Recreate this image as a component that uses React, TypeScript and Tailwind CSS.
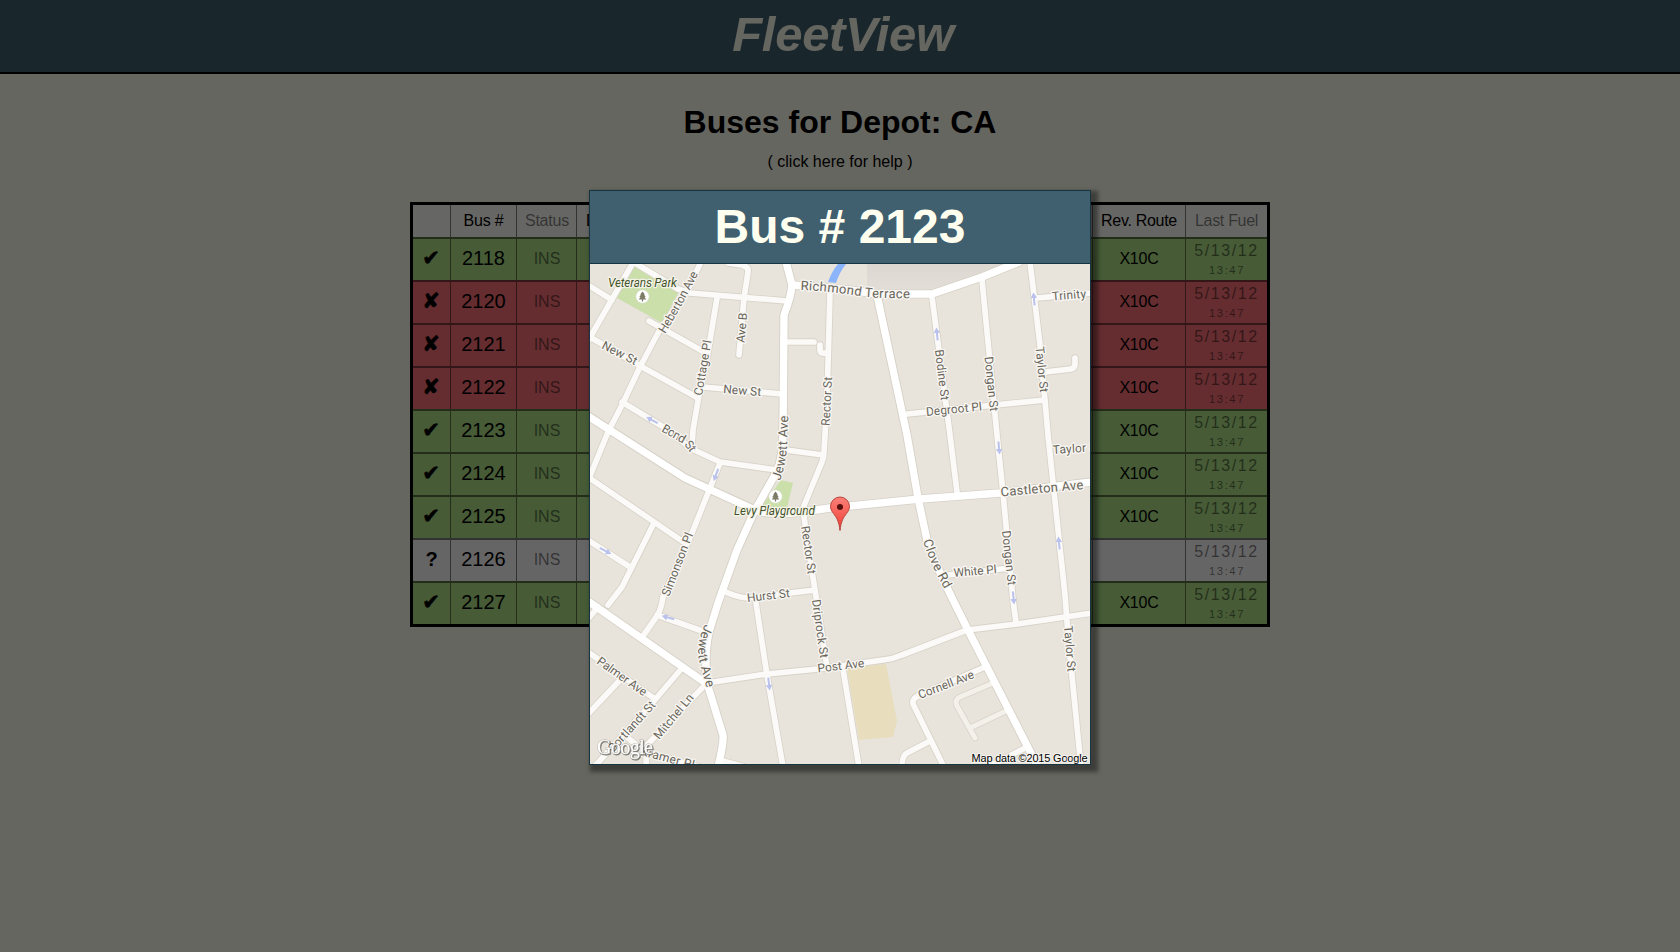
import React from 'react';

type Status = 'ok' | 'bad' | 'unknown';
type Bus = { id: string; status: Status; route: string };

const buses: Bus[] = [
  { id: '2118', status: 'ok', route: 'X10C' },
  { id: '2120', status: 'bad', route: 'X10C' },
  { id: '2121', status: 'bad', route: 'X10C' },
  { id: '2122', status: 'bad', route: 'X10C' },
  { id: '2123', status: 'ok', route: 'X10C' },
  { id: '2124', status: 'ok', route: 'X10C' },
  { id: '2125', status: 'ok', route: 'X10C' },
  { id: '2126', status: 'unknown', route: '' },
  { id: '2127', status: 'ok', route: 'X10C' },
];

const rowColor: Record<Status, string> = {
  ok: 'bg-[#afe487]',
  bad: 'bg-[#fc7078]',
  unknown: 'bg-[#fffdff]',
};

const columns = 'grid grid-cols-[38px_66px_60px_516px_93px_81px]';
const cell = 'flex items-center justify-center border-r border-black/50';

function StatusMark({ status }: { status: Status }) {
  if (status === 'unknown') return <span className="mb-[3px] text-xl font-bold">?</span>;
  return (
    <span className="mb-[3px] mr-px font-['DejaVu_Sans'] text-[21px] leading-none [-webkit-text-stroke:0.7px_black]">
      {status === 'ok' ? '✔' : '✘'}
    </span>
  );
}

function BusRow({ bus }: { bus: Bus }) {
  return (
    <div className={`${columns} ${rowColor[bus.status]} h-[43px] border-t-2 border-black/50`}>
      <div className={cell}><StatusMark status={bus.status} /></div>
      <div className={`${cell} pb-[4px] text-xl`}>{bus.id}</div>
      <div className={`${cell} pb-px pl-px text-black/50`}>INS</div>
      <div className={cell} />
      <div className={`${cell} pb-px tracking-[-0.2px]`}>{bus.route}</div>
      <div className="flex flex-col items-center text-black/50 tracking-[1.6px]">
        <span className="mt-[2px] leading-[20px]">5/13/12</span>
        <span className="mt-[1px] pl-px text-[11.2px] leading-[16px]">13:47</span>
      </div>
    </div>
  );
}

const minorRoads = [
  'M634 261L588 341',
  'M630 260L678 289L690 293L787 301',
  'M701 262L688 289L658 333L640 367L622 405L608 432L588 481',
  'M588 285L612 300',
  'M649 321L704 352',
  'M588 336L642 367L698 398',
  'M717 298L708 352L699 395L693 430L692 446',
  'M728 263L742 265Q749 267 748 272L744 298L739 355',
  'M785 342L814 342',
  'M830 293L827 400L824 452Q824 457 822 462L803 508L807 540L815 590L827 667',
  'M826 353Q820 354 820 350L820 345',
  'M703 387L782 394',
  'M622 402L665 428L692 449L720 462L777 470',
  'M786 450L823 455',
  'M720 463L692 533L663 597Q661 610 657 616L643 636',
  'M588 477L685 543',
  'M653 525L622 587L608 605',
  'M588 540L630 567',
  'M588 619L598 607',
  'M657 615L705 632',
  'M707 683L767 674L818 669L840 666L883 660Q893 659 902 655L967 630L1017 624L1092 613',
  'M588 652L655 699',
  'M682 668L653 702L595 766',
  'M620 680L588 714',
  'M702 688L647 745L646 766',
  'M628 738L645 752L700 767',
  'M723 761L745 767',
  'M724 591Q735 597 748 598L815 590',
  'M756 603L767 675L783 767',
  'M843 669L859 767',
  'M932 297L950 435L957 492',
  'M982 280L997 435L1003 493L1013 600L1016 622',
  'M1030 262L1040 345L1048 435L1065 595L1068 635L1081 767',
  'M1037 298L1092 293',
  'M1045 372L1071 369Q1075 368 1075 364L1075 358',
  'M907 414L1045 400',
  'M947 575L1010 568',
  'M985 667L920 695Q910 699 914 706L944 767',
  'M930 741L907 753Q902 756 902 767',
  'M1027 747L988 767',
];
const faintRoads = ['M993 683L960 697Q954 700 957 706L975 738', 'M1008 710L970 728'];
const majorRoads = [
  'M786 262L792 285Q791 297 784 315L783 435Q783 459 776 473L755 510L737 550L718 603L709 632Q704 655 707 683L723 735Q724 742 718 767',
  'M792 285L850 290L877 294L932 294L982 277L1019 262',
  'M588 416L685 478L755 510Q770 516 802 512L830 508L920 499L1000 493L1092 482',
  'M588 601L707 684',
  'M877 295L907 435L918 498L927 540Q932 557 953 600L968 630L1038 767',
];

type Label = { text: string; d: string; len?: number; size?: number; italic?: boolean };

const labels: Label[] = [
  { text: 'Veterans Park', d: 'M608 287L700 287', len: 69, italic: true },
  { text: 'Heberton Ave', d: 'M665 334Q684 303 701 268', len: 69 },
  { text: 'New St', d: 'M601 348L640 368', len: 38 },
  { text: 'Cottage Pl', d: 'M702 396L713 332', len: 56 },
  { text: 'Ave B', d: 'M744.5 343L748 305', len: 30 },
  { text: 'New St', d: 'M723 393L765 396.5', len: 38 },
  { text: 'Rector St', d: 'M829.5 426L832.5 370', len: 49 },
  { text: 'Jewett Ave', d: 'M780 481Q786 465 787 445L789 405', len: 66, size: 13 },
  { text: 'Bond St', d: 'M661 431L680 442Q687 446 694 459', len: 37 },
  { text: 'Levy Playground', d: 'M734 515L840 515', len: 81, italic: true },
  { text: 'Simonson Pl', d: 'M669 597L696 528', len: 67 },
  { text: 'Hurst St', d: 'M747.5 602L800 596', len: 43 },
  { text: 'Rector St', d: 'M801 527Q805 550 809 585', len: 48 },
  { text: 'Driprock St', d: 'M812 600L821.5 668', len: 59 },
  { text: 'Post Ave', d: 'M818 672.5L870 666.500', len: 47 },
  { text: 'Jewett Ave', d: 'M705 624Q696 643 699 660L709 697', len: 66, size: 13 },
  { text: 'Palmer Ave', d: 'M596 663L654 704', len: 58 },
  { text: 'Cortlandt St', d: 'M613 753L664 697', len: 64 },
  { text: 'Mitchel Ln', d: 'M659 740L701 690', len: 55 },
  { text: 'Kramer Pl', d: 'M640 755L705 772', len: 55 },
  { text: 'Bodine St', d: 'M935 350L942 410', len: 51 },
  { text: 'Dongan St', d: 'M984.5 357L991.5 425', len: 55 },
  { text: 'Taylor St', d: 'M1035.5 347L1041 402', len: 46 },
  { text: 'Degroot Pl', d: 'M926.5 416L992 409.5', len: 56 },
  { text: 'Trinity', d: 'M1052.5 300.5L1095 297', len: 34 },
  { text: 'Richmond Terrace', d: 'M800.5 290Q830 291 862 296.5Q885 299 925 298', len: 110, size: 13 },
  { text: 'Taylor St', d: 'M1053 454L1115 450', len: 48 },
  { text: 'Castleton Ave', d: 'M1001 496.5L1090 488.5', len: 83, size: 13 },
  { text: 'Clove Rd', d: 'M923 541Q930 565 950 598', len: 53, size: 13 },
  { text: 'White Pl', d: 'M954 577L1005 572.5', len: 43 },
  { text: 'Dongan St', d: 'M1002 531L1009 595', len: 55 },
  { text: 'Cornell Ave', d: 'M920 699L985 674', len: 59 },
  { text: 'Taylor St', d: 'M1064 626L1069 690', len: 46 },
];

const oneWayArrows: [number, number, number][] = [
  [652, 420, 208],
  [937, 334, 264],
  [1034, 299, 264],
  [716, 475, 110],
  [605.5, 551, 28],
  [668, 617.5, 196],
  [769, 684, 83],
  [999, 448, 85],
  [1059, 543, 264],
  [1013.5, 598, 85],
];

function Tree({ x, y }: { x: number; y: number }) {
  return (
    <g transform={`translate(${x} ${y})`}>
      <circle r="6.7" fill="#fff" stroke="#cfd8bd" strokeWidth=".6" />
      <path d="M0-5L2.4-2H1.5L3.2.5H2L3.8 3H.6V5H-.6V3H-3.8L-2 .5H-3.2L-1.5-2H-2.4Z" fill="#7c7c68" />
    </g>
  );
}

function StreetMap() {
  return (
    <svg className="block" width="500" height="500" viewBox="590 264 500 500">
      <defs>
        <linearGradient id="pin" x1="0" y1="0" x2="0" y2="1">
          <stop offset="0" stopColor="#fb8078" />
          <stop offset="1" stopColor="#f03c33" />
        </linearGradient>
        <linearGradient id="shore" x1="0" y1="0" x2="0" y2="1">
          <stop offset="0" stopColor="#dcd7d0" />
          <stop offset="1" stopColor="#e3ded7" />
        </linearGradient>
      </defs>
      <rect x="590" y="264" width="500" height="500" fill="#e8e4dc" />
      <path d="M867 264H1017L982 276L932 292L867 291Z" fill="url(#shore)" />
      <path d="M838 264Q832 271 828 282L836 283Q839 273 846 264Z" fill="#8cb4fb" />
      <path d="M634 266L680 290L662 323L617 298Z" fill="#cbdfaa" />
      <path d="M781 480L793 483L787 508L762 506Z" fill="#cbdfaa" />
      <path d="M847 668L886 664L897 721L893 737L859 740Z" fill="#e8ddbd" />
      <g fill="none" strokeLinecap="round" strokeLinejoin="round">
        <g stroke="#d8d3c8" strokeWidth="7.4">
          {minorRoads.map((d) => <path key={d} d={d} />)}
        </g>
        <g stroke="#d8d3c8" strokeWidth="6.6">
          {faintRoads.map((d) => <path key={d} d={d} />)}
        </g>
        <g stroke="#d6d1c6" strokeWidth="9.2">
          {majorRoads.map((d) => <path key={d} d={d} />)}
        </g>
        <g stroke="#f4f1ea" strokeWidth="5">
          {faintRoads.map((d) => <path key={d} d={d} />)}
        </g>
        <g stroke="#fbfaf8" strokeWidth="5.7">
          {minorRoads.map((d) => <path key={d} d={d} />)}
        </g>
        <g stroke="#fff" strokeWidth="7.4">
          {majorRoads.map((d) => <path key={d} d={d} />)}
        </g>
      </g>
      {oneWayArrows.map(([x, y, a]) => (
        <path
          key={`${x}-${y}`}
          transform={`translate(${x} ${y}) rotate(${a})`}
          d="M-6.5-1H1V-3.2L6.5 0L1 3.2V1H-6.500Z"
          fill="#b9c1ec"
        />
      ))}
      <Tree x={642.5} y={296.5} />
      <Tree x={775.5} y={496.5} />
      {labels.map(({ text, d, len, size, italic }, i) => (
        <g key={i}>
          <path id={`street-${i}`} d={d} fill="none" />
          <text
            fontFamily="Roboto, sans-serif"
            fontSize={size ?? 12}
            fontStyle={italic ? 'italic' : 'normal'}
            fill={italic ? '#43522c' : '#69655a'}
            stroke={italic ? '#f3f2e6' : '#f8f6f2'}
            strokeWidth="2.6"
            strokeLinejoin="round"
            paintOrder="stroke"
          >
            <textPath href={`#street-${i}`} textLength={len}>{text}</textPath>
          </text>
        </g>
      ))}
      <path
        d="M840 530.5C839 521 836.500 517.500 833.500 513.500C831.500 511 830.500 508.500 830.500 506.500A9.500 9.500 0 0 1 849.500 506.500C849.500 508.500 848.500 511 846.500 513.500C843.500 517.500 841 521 840 530.500Z"
        fill="url(#pin)"
        stroke="#b8453c"
        strokeWidth="1"
      />
      <circle cx="840" cy="507" r="3" fill="#54110e" />
      <text
        className="[filter:drop-shadow(1px_1px_0.6px_rgba(90,88,84,0.75))]"
        x="597"
        y="753.5"
        fontFamily="'Liberation Serif', serif"
        fontSize="20"
        textLength="56"
        fill="#fff"
        stroke="#b3afa7"
        strokeWidth="0.8"
        paintOrder="stroke"
      >
        Google
      </text>
      <text
        x="971.500"
        y="762"
        fontFamily="'Liberation Sans', sans-serif"
        fontSize="11"
        textLength="116"
        fill="#000"
        stroke="#f4f2ee"
        strokeWidth="2"
        paintOrder="stroke"
      >
        Map data ©2015 Google
      </text>
    </svg>
  );
}

export default function App() {
  return (
    <div className="relative h-[952px] w-[1680px] overflow-hidden bg-[#fffff0] font-['Liberation_Sans',sans-serif] text-base text-black">
      <header className="flex h-[74px] justify-center border-b-2 border-black bg-[#40606f]">
        <h1 className="ml-[6px] mt-[7px] text-[49px] font-bold italic leading-[55px] tracking-[-0.3px] text-[#fffff0]">
          FleetView
        </h1>
      </header>
      <main className="flex flex-col items-center">
        <h2 className="mt-[30px] text-[32px] font-bold leading-[37px]">Buses for Depot: CA</h2>
        <p className="mt-[12px] leading-[18px]">( click here for help )</p>
        <section className="mt-[31px] w-[860px] border-[3px] border-black">
          <div className={`${columns} h-[32px] bg-[#fffffa]`}>
            <div className={cell} />
            <div className={`${cell} pb-px tracking-[-0.2px]`}>Bus #</div>
            <div className={`${cell} pb-px pl-px tracking-[-0.2px] text-black/50`}>Status</div>
            <div className="flex items-center border-r border-black/50 pb-px pl-[9px]">D</div>
            <div className={`${cell} pb-px tracking-[-0.3px]`}>Rev. Route</div>
            <div className="flex items-center justify-center pb-px tracking-[-0.3px] text-black/50">Last Fuel</div>
          </div>
          {buses.map((bus) => <BusRow key={bus.id} bus={bus} />)}
        </section>
      </main>
      <div className="absolute inset-0 flex items-start justify-center bg-black/60 pt-[190px]">
        <div className="w-[502px] border border-[#163442] shadow-[4px_4px_4px_3px_rgba(0,0,0,0.4)]">
          <div className="flex h-[73px] items-center justify-center border-b border-[#163442] bg-[#40606f]">
            <h2 className="text-5xl font-bold text-[#fffff0]">Bus # 2123</h2>
          </div>
          <StreetMap />
        </div>
      </div>
    </div>
  );
}
